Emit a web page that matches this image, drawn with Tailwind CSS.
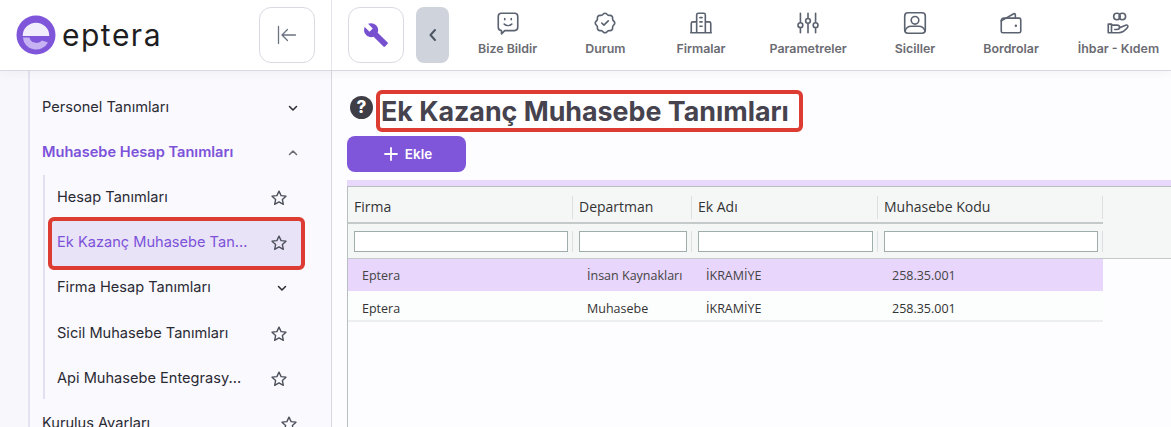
<!DOCTYPE html>
<html lang="en">
<head>
  <meta charset="UTF-8" />
  <title>Ek Kazanç Muhasebe Tanımları</title>
  <script src="https://cdn.jsdelivr.net/npm/@tailwindcss/browser@4"></script>
</head>
<body class="h-[427px] overflow-hidden bg-white font-['Inter',sans-serif]">

  <!-- Top bar -->
  <header class="relative z-10 flex h-[71px] border-b border-[#d8d8e0] bg-white shadow-[0_3px_10px_rgba(0,0,0,0.04)]">
    <div class="flex w-[332px] shrink-0 items-center border-r border-[#e4e4ea] pl-4 pr-4">
      <svg class="h-10 w-10 shrink-0" viewBox="0 0 40 40">
        <circle cx="20" cy="20" r="19.5" fill="#7f56d9" />
        <path d="M6.700 21a13.300 13.300 0 0 1 26.600 0z" fill="#f2edfd" />
        <path d="M6.900 22.500h6.600a7 6 0 0 0 12.500 3l6 2a13.300 13 0 0 1-25.100-5z" fill="#c6b2f3" />
      </svg>
      <span class="ml-[6px] text-[30px] leading-none tracking-[1.500px] text-[#1d1d22]">eptera</span>
      <button class="ml-auto flex h-14 w-14 items-center justify-center rounded-xl border border-[#d9d9e2] text-[#6b7280]">
        <svg class="h-5 w-5" viewBox="0 0 20 20" fill="none" stroke="currentColor" stroke-width="1.300" stroke-linecap="round" stroke-linejoin="round"><path d="M1.500 1.500v17M18.500 10H5M10.500 4.500 5 10l5.500 5.500" /></svg>
      </button>
    </div>
    <div class="flex items-center pl-4">
      <button class="flex h-14 w-14 items-center justify-center rounded-xl border border-[#d9d9e2]">
        <svg class="h-[26px] w-[26px]" viewBox="0 0 24 24" fill="#7750d0"><path d="M22.700 19l-9.100-9.100c.9-2.300.4-5-1.500-6.900-2-2-5-2.400-7.400-1.300L9 6 6 9 1.600 4.700C.4 7.100.9 10.100 2.900 12.100c1.900 1.900 4.600 2.400 6.900 1.500l9.100 9.100c.4.4 1 .4 1.400 0l2.300-2.300c.5-.4.5-1.100.1-1.400z" /></svg>
      </button>
      <button class="ml-3 flex h-14 w-[33px] items-center justify-center rounded-lg bg-[#cfd3dc] text-[#4b5563]">
        <svg class="h-4 w-4" viewBox="0 0 16 16" fill="none" stroke="currentColor" stroke-width="2" stroke-linecap="round" stroke-linejoin="round"><path d="M10 3 5.500 8l4.500 5" /></svg>
      </button>
      <nav class="mb-[2px] ml-[29px] flex gap-[48px] text-[12.400px] font-semibold text-[#6b6b72]">
        <a class="flex flex-col items-center gap-[4px] whitespace-nowrap">
          <svg class="h-[26px] w-[26px]" viewBox="0 0 24 24" fill="none" stroke="#5b6270" stroke-width="1.500" stroke-linecap="round" stroke-linejoin="round"><path d="M6 3h12a3 3 0 0 1 3 3v10a3 3 0 0 1-3 3h-9l-3 3v-3a3 3 0 0 1-3-3V6a3 3 0 0 1 3-3z" /><path d="M9 8v1M15 8v1M8.500 13c2 1.800 5 1.800 7 0" /></svg>
          Bize Bildir
        </a>
        <a class="flex flex-col items-center gap-[4px] whitespace-nowrap">
          <svg class="h-[26px] w-[26px]" viewBox="0 0 24 24" fill="none" stroke="#5b6270" stroke-width="1.500" stroke-linecap="round" stroke-linejoin="round"><path d="M5 7.200a2.200 2.200 0 0 1 2.200-2.200h1a2.200 2.200 0 0 0 1.550-.64l.7-.7a2.200 2.200 0 0 1 3.120 0l.7.7c.412.41.97.64 1.550.64h1a2.200 2.200 0 0 1 2.200 2.200v1c0 .58.23 1.138.64 1.550l.7.7a2.200 2.200 0 0 1 0 3.120l-.7.7a2.200 2.200 0 0 0-.64 1.550v1a2.200 2.200 0 0 1-2.200 2.200h-1a2.200 2.200 0 0 0-1.550.64l-.7.7a2.200 2.200 0 0 1-3.120 0l-.7-.7a2.200 2.200 0 0 0-1.550-.64h-1a2.200 2.200 0 0 1-2.200-2.200v-1a2.200 2.200 0 0 0-.64-1.550l-.7-.7a2.200 2.200 0 0 1 0-3.120l.7-.7a2.200 2.200 0 0 0 .64-1.550v-1" /><path d="m9 12 2 2 4-4" /></svg>
          Durum
        </a>
        <a class="ml-[3px] flex flex-col items-center gap-[4px] whitespace-nowrap">
          <svg class="h-[26px] w-[26px]" viewBox="0 0 24 24" fill="none" stroke="#5b6270" stroke-width="1.500" stroke-linecap="round" stroke-linejoin="round"><path d="M2.500 21h19M8 21V4.500A1.500 1.500 0 0 1 9.500 3h5A1.500 1.500 0 0 1 16 4.500V21M8 11H4.500A1.500 1.500 0 0 0 3 12.500V21M16 11h3.500a1.500 1.500 0 0 1 1.500 1.500V21M11 7h2M11 11h2M11 15h2" /></svg>
          Firmalar
        </a>
        <a class="-ml-[4px] flex flex-col items-center gap-[4px] whitespace-nowrap">
          <svg class="h-[26px] w-[26px]" viewBox="0 0 24 24" fill="none" stroke="#5b6270" stroke-width="1.500" stroke-linecap="round" stroke-linejoin="round"><path d="M5 3v8M5 17v4M12 3v4M12 13v8M19 3v8M19 17v4" /><circle cx="5" cy="14" r="2.200" /><circle cx="12" cy="10" r="2.200" /><circle cx="19" cy="14" r="2.200" /></svg>
          Parametreler
        </a>
        <a class="flex flex-col items-center gap-[4px] whitespace-nowrap">
          <svg class="h-[26px] w-[26px]" viewBox="0 0 24 24" fill="none" stroke="#5b6270" stroke-width="1.500" stroke-linecap="round" stroke-linejoin="round"><rect x="2.500" y="2.500" width="19" height="19" rx="3" /><circle cx="12" cy="9.500" r="3.500" /><path d="M3 19c1-3 3.500-4 5.500-4h7c2 0 4.500 1 5.500 4" /></svg>
          Siciller
        </a>
        <a class="flex flex-col items-center gap-[4px] whitespace-nowrap">
          <svg class="h-[26px] w-[26px]" viewBox="0 0 24 24" fill="none" stroke="#5b6270" stroke-width="1.500" stroke-linecap="round" stroke-linejoin="round"><path d="M3 10a2.500 2.500 0 0 1 2.500-2.500h14A1.500 1.500 0 0 1 21 9v10.500a1.500 1.500 0 0 1-1.500 1.500h-15A1.500 1.500 0 0 1 3 19.500z" /><path d="M3 10 14.500 3.500a1 1 0 0 1 1.500.9V7.500" /><path d="M16.500 14.500h.01" stroke-width="2.200" /></svg>
          Bordrolar
        </a>
        <a class="-ml-[9px] flex flex-col items-center gap-[4px] whitespace-nowrap">
          <svg class="h-[26px] w-[26px]" viewBox="0 0 24 24" fill="none" stroke="#5b6270" stroke-width="1.500" stroke-linecap="round" stroke-linejoin="round"><circle cx="11" cy="6" r="3" /><circle cx="16" cy="6" r="3" /><path d="M3 13h3v8H3zM6 14h5c1.500 0 2.500.8 2.500 2s-1 2-2.500 2H9M13 16.500l6-2.500c1.500-.6 2.800.9 1.800 2.200-1.500 1.900-4.800 4.800-8.300 4.800H6" /></svg>
          İhbar - Kıdem
        </a>
      </nav>
    </div>
  </header>

  <div class="flex h-[356px]">
    <!-- Sidebar -->
    <aside class="flex w-[332px] shrink-0 overflow-hidden border-r border-[#d8d8e0] bg-[#faf9fe] text-[14.600px] text-[#2a2a33]">
      <div class="w-[30px] shrink-0 border-r-2 border-[#e6e2f0] bg-[#f8f7fb]"></div>
      <div class="min-w-0 flex-1 pr-[26px] pt-[14px]">
        <div class="flex h-[45px] items-center justify-between pl-[12px] pr-[6px]">
          <span>Personel Tanımları</span>
          <svg class="h-3 w-3" viewBox="0 0 12 12" fill="none" stroke="#2a2a33" stroke-width="1.500" stroke-linecap="round" stroke-linejoin="round"><path d="m2.500 4.500 3.500 3.500 3.500-3.500" /></svg>
        </div>
        <div class="flex h-[45px] items-center justify-between pl-[12px] pr-[6px] font-semibold text-[#7c52d9]">
          <span>Muhasebe Hesap Tanımları</span>
          <svg class="h-3 w-3" viewBox="0 0 12 12" fill="none" stroke="#6b6b72" stroke-width="1.500" stroke-linecap="round" stroke-linejoin="round"><path d="m2.500 7.500 3.500-3.500 3.500 3.500" /></svg>
        </div>
        <div class="ml-[13px] border-l-2 border-[#e4dff3] pl-[3px]">
          <div class="flex h-[45px] items-center justify-between pl-[9px] pr-[17px]">
            <span>Hesap Tanımları</span>
            <svg class="h-[18px] w-[18px]" viewBox="0 0 24 24" fill="none" stroke="#4b4f5a" stroke-width="1.800" stroke-linejoin="round"><path d="m12 2.800 2.800 6 6.500.8-4.800 4.400 1.300 6.400-5.800-3.200-5.800 3.200 1.300-6.400-4.800-4.400 6.500-.8z" /></svg>
          </div>
          <div class="-mb-[5px] -mt-[3px] flex h-[53px] items-center justify-between rounded-md border-4 border-[#dc3c32] bg-[#e9e3f8] pb-[2px] pl-[5px] pr-[13px] text-[#7c52d9]">
            <span>Ek Kazanç Muhasebe Tan...</span>
            <svg class="h-[18px] w-[18px]" viewBox="0 0 24 24" fill="none" stroke="#4b4f5a" stroke-width="1.800" stroke-linejoin="round"><path d="m12 2.800 2.800 6 6.500.8-4.800 4.400 1.300 6.400-5.800-3.200-5.800 3.200 1.300-6.400-4.800-4.400 6.500-.8z" /></svg>
          </div>
          <div class="flex h-[46px] items-center justify-between pl-[9px] pr-[17px]">
            <span>Firma Hesap Tanımları</span>
            <svg class="h-3 w-3" viewBox="0 0 12 12" fill="none" stroke="#2a2a33" stroke-width="1.500" stroke-linecap="round" stroke-linejoin="round"><path d="m2.500 4.500 3.500 3.500 3.500-3.500" /></svg>
          </div>
          <div class="flex h-[45px] items-center justify-between pl-[9px] pr-[17px]">
            <span>Sicil Muhasebe Tanımları</span>
            <svg class="h-[18px] w-[18px]" viewBox="0 0 24 24" fill="none" stroke="#4b4f5a" stroke-width="1.800" stroke-linejoin="round"><path d="m12 2.800 2.800 6 6.500.8-4.800 4.400 1.300 6.400-5.800-3.200-5.800 3.200 1.300-6.400-4.800-4.400 6.500-.8z" /></svg>
          </div>
          <div class="flex h-[43px] items-center justify-between pl-[9px] pr-[17px] pt-[2px]">
            <span>Api Muhasebe Entegrasy...</span>
            <svg class="h-[18px] w-[18px]" viewBox="0 0 24 24" fill="none" stroke="#4b4f5a" stroke-width="1.800" stroke-linejoin="round"><path d="m12 2.800 2.800 6 6.500.8-4.800 4.400 1.300 6.400-5.800-3.200-5.800 3.200 1.300-6.400-4.800-4.400 6.500-.8z" /></svg>
          </div>
        </div>
        <div class="mt-[2px] flex h-[45px] items-center justify-between pl-[12px] pr-[7px]">
          <span>Kuruluş Ayarları</span>
          <svg class="h-[18px] w-[18px]" viewBox="0 0 24 24" fill="none" stroke="#4b4f5a" stroke-width="1.800" stroke-linejoin="round"><path d="m12 2.800 2.800 6 6.500.8-4.800 4.400 1.300 6.400-5.800-3.200-5.800 3.200 1.300-6.400-4.800-4.400 6.500-.8z" /></svg>
        </div>
      </div>
    </aside>

    <!-- Main content -->
    <main class="min-w-0 flex-1 bg-[#fdfdff] pl-[15px] pt-[19px]">
      <div class="flex h-[42px] items-start">
        <span class="ml-[3px] mt-[6px] flex h-[23px] w-[23px] shrink-0 items-center justify-center rounded-full bg-[#3f3d46] text-[17px] font-extrabold leading-none text-white">?</span>
        <h1 class="ml-[3px] flex h-[42px] w-[427px] items-center rounded-md border-4 border-[#dc3c32] bg-white pl-[1px] text-[26.800px] font-bold whitespace-nowrap text-[#46434f]">Ek Kazanç Muhasebe Tanımları</h1>
      </div>
      <button class="mt-[4px] flex h-9 w-[119px] items-center justify-center gap-[6px] rounded-lg bg-[#7f56d9] pl-[2px] text-[13.500px] font-semibold text-white">
        <svg class="h-4 w-4" viewBox="0 0 16 16" fill="none" stroke="white" stroke-width="1.800" stroke-linecap="round"><path d="M8 2v12M2 8h12" /></svg>
        Ekle
      </button>

      <!-- Grid -->
      <div class="mt-2 h-[6px] bg-[#e8d8fb]"></div>
      <div class="h-[241px] border-l border-t border-[#b8bfc0] font-['Open_Sans',sans-serif] text-[#333]">
        <div class="border-b border-[#c4caca] bg-[#f5f7f7]">
          <div class="grid h-[37px] w-[755px] grid-cols-[225px_119px_186px_225px] border-b-2 border-[#c4caca] text-[14px]">
            <div class="my-[9px] flex items-center border-r border-[#dcdfe0] pb-[2px] pl-[6px]">Firma</div>
            <div class="my-[9px] flex items-center border-r border-[#dcdfe0] pb-[2px] pl-[6px]">Departman</div>
            <div class="my-[9px] flex items-center border-r border-[#dcdfe0] pb-[2px] pl-[6px]">Ek Adı</div>
            <div class="my-[9px] flex items-center border-r border-[#dcdfe0] pb-[2px] pl-[6px]">Muhasebe Kodu</div>
          </div>
          <div class="grid h-[34px] w-[755px] grid-cols-[225px_119px_186px_225px] items-center">
            <div class="border-r border-[#dcdfe0] pl-[6px] pr-[4px]"><input class="block h-[21px] w-full border border-[#a0adad] bg-white" /></div>
            <div class="border-r border-[#dcdfe0] pl-[6px] pr-[4px]"><input class="block h-[21px] w-full border border-[#a0adad] bg-white" /></div>
            <div class="border-r border-[#dcdfe0] pl-[6px] pr-[4px]"><input class="block h-[21px] w-full border border-[#a0adad] bg-white" /></div>
            <div class="border-r border-[#dcdfe0] pl-[6px] pr-[4px]"><input class="block h-[21px] w-full border border-[#a0adad] bg-white" /></div>
          </div>
        </div>
        <div class="grid h-[32px] w-[755px] grid-cols-[225px_119px_186px_225px] items-center bg-[#e8d6fc] pt-[2px] text-[12.500px] text-[#444]">
          <div class="pl-[14px]">Eptera</div>
          <div class="pl-[14px] whitespace-nowrap">İnsan Kaynakları</div>
          <div class="pl-[14px]">İKRAMİYE</div>
          <div class="pl-[14px]">258.35.001</div>
        </div>
        <div class="mt-[1px] grid h-[30px] w-[755px] grid-cols-[225px_119px_186px_225px] items-center border-b-2 border-[#eceef0] bg-[#fcfdfd] pt-[6px] text-[12.500px] text-[#333]">
          <div class="pl-[14px]">Eptera</div>
          <div class="pl-[14px]">Muhasebe</div>
          <div class="pl-[14px]">İKRAMİYE</div>
          <div class="pl-[14px]">258.35.001</div>
        </div>
      </div>
    </main>
  </div>

</body>
</html>
